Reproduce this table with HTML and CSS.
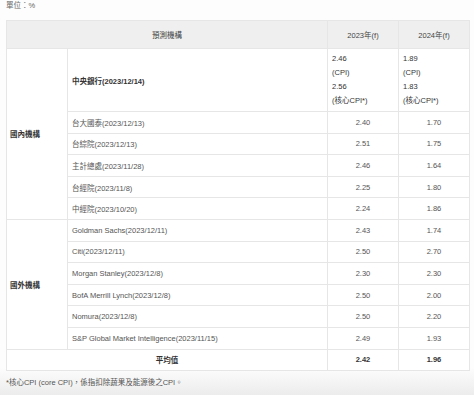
FILE: index.html
```html
<!DOCTYPE html>
<html>

<head>
	<title>CPI 預測</title>
	<meta charset=utf-8>
	<meta name=viewport content="width=device-width, initial-scale=1">
	<link rel="stylesheet" href="styles.css">
</head>

<body>
	<div class="page">
		<div class="unit">單位：%</div>
		<table class="cpi">
			<colgroup>
				<col class="c-group">
				<col class="c-name">
				<col class="c-val">
				<col class="c-val">
			</colgroup>
			<thead>
				<tr>
					<th colspan="2">預測機構</th>
					<th>2023年(f)</th>
					<th>2024年(f)</th>
				</tr>
			</thead>
			<tbody>
				<tr class="tall">
					<td class="group" rowspan="6">國內機構</td>
					<td class="strong">中央銀行(2023/12/14)</td>
					<td class="multi">2.46<br>(CPI)<br>2.56<br>(核心CPI*)</td>
					<td class="multi">1.89<br>(CPI)<br>1.83<br>(核心CPI*)</td>
				</tr>
				<tr>
					<td>台大國泰(2023/12/13)</td>
					<td class="num">2.40</td>
					<td class="num">1.70</td>
				</tr>
				<tr>
					<td>台綜院(2023/12/13)</td>
					<td class="num">2.51</td>
					<td class="num">1.75</td>
				</tr>
				<tr>
					<td>主計總處(2023/11/28)</td>
					<td class="num">2.46</td>
					<td class="num">1.64</td>
				</tr>
				<tr>
					<td>台經院(2023/11/8)</td>
					<td class="num">2.25</td>
					<td class="num">1.80</td>
				</tr>
				<tr>
					<td>中經院(2023/10/20)</td>
					<td class="num">2.24</td>
					<td class="num">1.86</td>
				</tr>
				<tr>
					<td class="group" rowspan="6">國外機構</td>
					<td>Goldman Sachs(2023/12/11)</td>
					<td class="num">2.43</td>
					<td class="num">1.74</td>
				</tr>
				<tr>
					<td>Citi(2023/12/11)</td>
					<td class="num">2.50</td>
					<td class="num">2.70</td>
				</tr>
				<tr>
					<td>Morgan Stanley(2023/12/8)</td>
					<td class="num">2.30</td>
					<td class="num">2.30</td>
				</tr>
				<tr>
					<td>BofA Merrill Lynch(2023/12/8)</td>
					<td class="num">2.50</td>
					<td class="num">2.00</td>
				</tr>
				<tr>
					<td>Nomura(2023/12/8)</td>
					<td class="num">2.50</td>
					<td class="num">2.20</td>
				</tr>
				<tr>
					<td>S&amp;P Global Market Intelligence(2023/11/15)</td>
					<td class="num">2.49</td>
					<td class="num">1.93</td>
				</tr>
				<tr class="avg">
					<td colspan="2">平均值</td>
					<td class="num">2.42</td>
					<td class="num">1.96</td>
				</tr>
			</tbody>
		</table>
		<div class="note">*核心CPI (core CPI)，係指扣除蔬果及能源後之CPI。</div>
	</div>
</body>

</html>
```
FILE: styles.css
```css
html,
body {
	margin: 0;
	height: 100%;
}

body {
	font-family: "Liberation Sans", "Noto Sans CJK TC", sans-serif;
	font-size: 7.5px;
	color: #555;
	background: linear-gradient(to bottom, #fdfdfd 0%, #fdfdfd 93%, #ececec 100%);
}

.page {
	padding: 1px 5px 0 6px;
}

.unit {
	height: 10px;
	line-height: 10px;
	margin-bottom: 9px;
	color: #666;
}

.cpi {
	width: 463px;
	border-collapse: collapse;
	background: #fff;
	table-layout: fixed;
}

.c-group {
	width: 61px;
}

.c-name {
	width: 260px;
}

.c-val {
	width: 71px;
}

.cpi th,
.cpi td {
	border: 1px solid #e6e6e6;
	padding: 0 4px;
	height: 20.6px;
	text-align: left;
	vertical-align: middle;
	font-weight: normal;
	white-space: nowrap;
}

.cpi th {
	background: #efefef;
	height: 27px;
	text-align: center;
	color: #444;
}

.cpi td.group {
	padding-left: 3px;
	font-weight: bold;
	color: #333;
}

.cpi td.strong {
	color: #333;
	font-weight: bold;
}

.cpi td.multi {
	line-height: 14px;
	padding: 3px 4px;
	height: 56px;
	color: #333;
}

.cpi td.num {
	text-align: center;
}

.cpi .avg td {
	text-align: center;
	font-weight: bold;
	color: #333;
}

.note {
	margin-top: 7px;
	height: 10px;
	line-height: 10px;
	color: #555;
}
```
